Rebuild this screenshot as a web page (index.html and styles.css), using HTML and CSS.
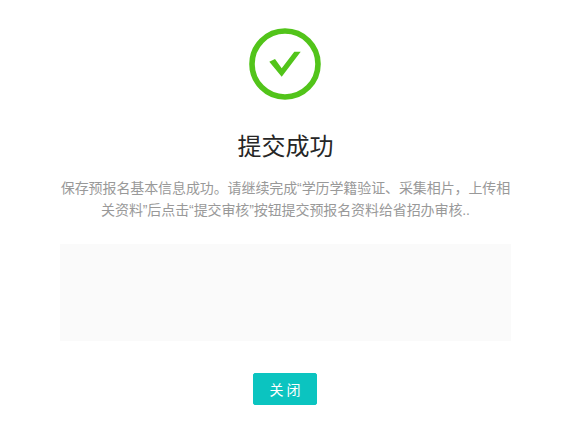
FILE: index.html
```html
<!DOCTYPE html>
<html lang="zh-CN">
<head>
<meta charset="utf-8">
<title>提交成功</title>
<link rel="stylesheet" href="styles.css">
</head>
<body>
<main class="result">
  <div class="result-icon">
    <svg class="result-svg" width="72" height="72" viewBox="0 0 72 72" aria-hidden="true">
      <circle class="ring" cx="36" cy="36" r="33"></circle>
      <path class="tick" d="M20.3 33.7 L26 31 L32.7 40.3 L45.3 23.7 L51.7 23.7 L32.7 48.7 Z"></path>
    </svg>
  </div>
  <h1 class="result-title">提交成功</h1>
  <p class="result-desc">保存预报名基本信息成功。请继续完成“学历学籍验证、采集相片，上传相关资料”后点击“提交审核”按钮提交预报名资料给省招办审核..</p>
  <div class="result-extra"></div>
  <div class="result-actions">
    <button class="btn-close" type="button">关闭</button>
  </div>
</main>
</body>
</html>
```
FILE: styles.css
```css
* { box-sizing: border-box; }
html, body { margin: 0; padding: 0; background: #fff; }
body { font-family: "Liberation Sans", "Noto Sans CJK SC", sans-serif; }
.result { width: 451px; margin-left: 60px; padding-top: 28px; text-align: center; }
.result-icon { height: 72px; display: flex; justify-content: center; }
.result-svg { margin-right: 1px; }
.ring { fill: none; stroke: #52c41a; stroke-width: 5.6; }
.tick { fill: #52c41a; }
.result-title { margin: 29px 0 0; font-size: 24px; line-height: 36px; font-weight: 400; color: #262626; }
.result-desc { margin: 12px 0 0; font-size: 14px; line-height: 22px; letter-spacing: -0.1px; color: #999; }
.result-extra { margin-top: 23px; height: 97px; background: #fafafa; }
.result-actions { margin-top: 32px; display: flex; justify-content: center; }
.btn-close { width: 64px; height: 32px; margin-right: 1px; padding: 0; border: 1px solid #0bc4c0; border-radius: 2px; background: #0bc4c0; color: #fff; font: inherit; font-size: 14px; letter-spacing: 3px; text-indent: 3px; }
```
